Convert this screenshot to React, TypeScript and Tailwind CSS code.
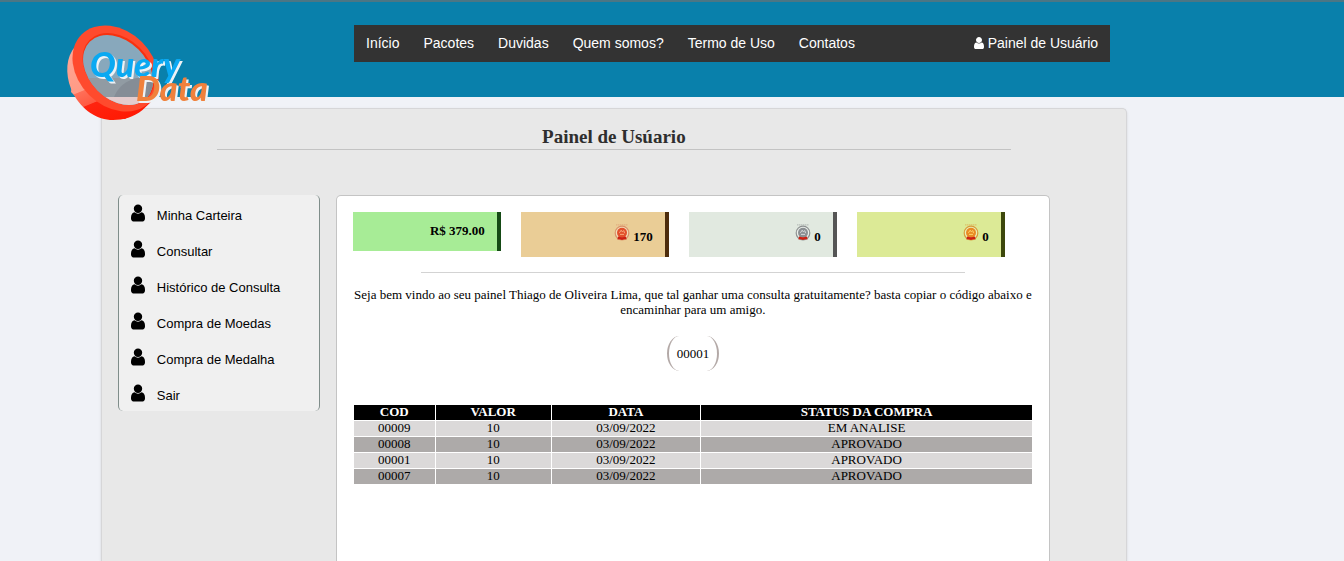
import React from "react";

const navLinks = ["Início", "Pacotes", "Duvidas", "Quem somos?", "Termo de Uso", "Contatos"];

const menuItems = [
  "Minha Carteira",
  "Consultar",
  "Histórico de Consulta",
  "Compra de Moedas",
  "Compra de Medalha",
  "Sair",
];

const purchases = [
  { cod: "00009", valor: "10", data: "03/09/2022", status: "EM ANALISE" },
  { cod: "00008", valor: "10", data: "03/09/2022", status: "APROVADO" },
  { cod: "00001", valor: "10", data: "03/09/2022", status: "APROVADO" },
  { cod: "00007", valor: "10", data: "03/09/2022", status: "APROVADO" },
];

const medals = [
  { name: "bronze", count: "170", card: "bg-[#eacd96] border-[#4d2c0c]", ring: "#d9926a", face: "#e2502c", glyph: "#f6a77c" },
  { name: "prata", count: "0", card: "bg-[#e1e9e0] border-[#555555]", ring: "#8d9191", face: "#8b9093", glyph: "#d5d8da" },
  { name: "ouro", count: "0", card: "bg-[#dcea96] border-[#3d480c]", ring: "#d99a3c", face: "#e98a24", glyph: "#fbd36b" },
];

function UserIcon({ className }: { className: string }) {
  return (
    <svg viewBox="0 128 1280 1536" fill="currentColor" className={className} aria-hidden="true">
      <path d="M1280 1399q0 109-62.5 187t-150.5 78h-854q-88 0-150.5-78t-62.5-187q0-85 8.5-160.5t31.5-152 58.5-131 94-89 134.5-34.5q131 128 313 128t313-128q76 0 134.5 34.5t94 89 58.5 131 31.5 152 8.5 160.5zm-256-887q0 159-112.5 271.5t-271.5 112.5-271.5-112.5-112.5-271.5 112.5-271.5 271.5-112.5 271.5 112.5 112.5 271.5z" />
    </svg>
  );
}

function Medal({ ring, face, glyph }: { ring: string; face: string; glyph: string }) {
  return (
    <svg viewBox="0 0 16 17" className="h-[17px] w-4" aria-hidden="true">
      <path d="M2 .9h12" stroke={ring} strokeWidth="1" strokeDasharray="1.5 .5" opacity=".6" />
      <circle cx="8" cy="9" r="6.8" fill="#fff" fillOpacity=".35" stroke={ring} strokeWidth="1.2" />
      <circle cx="8" cy="8.8" r="5" fill={face} />
      <path d="M5.4 8.8l1.8-2.6 1 1.6 1.6-1.2.8 2.6M6 10.4h4" fill="none" stroke={glyph} strokeWidth="1" />
      <path d="M4 12.6q4 1.4 8 0l.6 2.8-2.2-.2-2.4.8-2.4-.8-2.2.2z" fill="#cc1f12" />
    </svg>
  );
}

function Logo() {
  return (
    <svg viewBox="0 0 148 100" className="h-[100px] w-[148px]" role="img" aria-label="Query Data">
      <defs>
        <linearGradient id="coin-edge" x1="20" y1="20" x2="52" y2="98" gradientUnits="userSpaceOnUse">
          <stop offset="0" stopColor="#ffa795" />
          <stop offset=".52" stopColor="#ff9a85" />
          <stop offset=".53" stopColor="#ff6f58" />
          <stop offset=".7" stopColor="#ff5a42" />
          <stop offset=".71" stopColor="#ff2410" />
          <stop offset="1" stopColor="#ff1a04" />
        </linearGradient>
        <clipPath id="coin-glass">
          <ellipse cx="53" cy="48" rx="40" ry="29" transform="rotate(45 53 48)" />
        </clipPath>
      </defs>
      <g fill="url(#coin-edge)">
        <path d="M16.500 20L11 28L6 70L28 92L60 97L84.500 81Z" />
        <path d="M77.500 88C69 95 58 98 48 98C32 98 17 88 8.500 72C1 58 0 40 7 29C9.500 25 12 22 18 17L60 50L88 78Z" />
      </g>
      <ellipse cx="50.5" cy="46.500" rx="48" ry="37.400" transform="rotate(45 50.5 46.500)" fill="#ff4a2d" />
      <ellipse cx="53.500" cy="47" rx="41" ry="30" transform="rotate(45 53.500 47)" fill="#f7310f" />
      <g clipPath="url(#coin-glass)">
        <path d="M0 0h100v100H0z" fill="#89a9bc" />
        <path d="M0 56h100v44H0z" fill="#93999f" />
        <path d="M49 75Q55 60 72 56H100V75Z" fill="#858990" />
        <path d="M0 75h100v25H0z" fill="#f5d3d0" />
        <ellipse cx="50.500" cy="50" rx="40" ry="29" transform="rotate(45 50.500 50)" fill="#89a9bc" fillOpacity=".15" />
      </g>
      <g fontFamily="Lato, sans-serif" fontWeight="900" fontStyle="italic" className="[filter:drop-shadow(2px_2px_0_#eef2f5)]">
        <text x="25" y="55" fontSize="34" fill="#0aa9f2">Query</text>
        <text x="71" y="79" fontSize="34" fill="#f0813c">Data</text>
      </g>
    </svg>
  );
}

export default function App() {
  return (
    <div className="flex min-h-screen flex-col bg-[#f0f2f7] font-['Liberation_Serif',serif] text-[13px] leading-[15px] text-black">
      <header className="flex h-[97px] items-start border-t-2 border-[#4b7685] bg-[#0980ab] pr-[17.4%] pl-[65px]">
        <a href="#" className="relative z-10 mt-5 shrink-0">
          <Logo />
        </a>
        <nav className="mt-[23px] ml-[141px] flex h-[37px] flex-1 items-center justify-between bg-[#333333] px-3 pb-0.5 font-['Liberation_Sans',sans-serif] text-sm text-white">
          <ul className="flex gap-6">
            {navLinks.map((label) => (
              <li key={label}>
                <a href="#" className="whitespace-nowrap">{label}</a>
              </li>
            ))}
          </ul>
          <a href="#" className="flex items-center gap-1 whitespace-nowrap">
            <UserIcon className="h-3 w-[10px]" />
            Painel de Usuário
          </a>
        </nav>
      </header>

      <div className="mt-[11px] mr-[16.15%] ml-[7.5%] flex flex-1 flex-col rounded-t-[5px] border border-b-0 border-[#d6d6d8] bg-[#e8e8e8] px-4 shadow-sm">
        <h1 className="mx-auto w-4/5 border-b border-[#c3c3c3] pt-4 text-center text-[19px] leading-6 font-bold text-[#2e2e2e]">
          Painel de Usúario
        </h1>

        <div className="mt-[45px] flex flex-1 gap-4 pr-[60px]">
          <aside className="w-[202px] shrink-0 self-start rounded-[5px] border-x border-[#7f8d8a] bg-[#f0f0f0] font-['Liberation_Sans',sans-serif]">
            <ul>
              {menuItems.map((label) => (
                <li key={label}>
                  <a href="#" className="flex h-9 items-start gap-3 pt-[9px] pl-3">
                    <UserIcon className="h-[18px] w-[14px]" />
                    <span className="pt-1">{label}</span>
                  </a>
                </li>
              ))}
            </ul>
          </aside>

          <main className="min-w-0 flex-1 rounded-t-[5px] border border-b-0 border-[#c4c4c4] bg-white p-4">
            <div className="flex items-start gap-5 font-bold">
              <div className="w-[148px] border-r-4 border-[#154a15] bg-[#a7ec96] pt-[11px] pr-3 pb-[13px] text-right">R$ 379.00</div>
              {medals.map((m) => (
                <div key={m.name} className={`flex h-[45px] w-[148px] justify-end gap-[3px] border-r-4 pt-3 pr-3 ${m.card}`}>
                  <Medal ring={m.ring} face={m.face} glyph={m.glyph} />
                  <span className="pt-[5px]">{m.count}</span>
                </div>
              ))}
            </div>

            <hr className="mx-auto mt-[15px] w-4/5 border-[#d3d3d3]" />

            <p className="mt-[14px] text-center">
              Seja bem vindo ao seu painel Thiago de Oliveira Lima, que tal ganhar uma consulta gratuitamente? basta
              copiar o código abaixo e encaminhar para um amigo.
            </p>

            <div className="mx-auto mt-[19px] w-fit rounded-[14px/20px] border-x-2 border-[#b3a9a7] px-2 py-[10px]">00001</div>

            <table className="mt-[33px] w-full table-fixed border-separate border-spacing-px text-center leading-[13px]">
              <colgroup>
                <col className="w-[12%]" />
                <col className="w-[17%]" />
                <col className="w-[22%]" />
                <col />
              </colgroup>
              <thead className="bg-black text-white">
                <tr>
                  {["COD", "VALOR", "DATA", "STATUS DA COMPRA"].map((h) => (
                    <th key={h} scope="col" className="px-0 pt-0 pb-0.5">{h}</th>
                  ))}
                </tr>
              </thead>
              <tbody>
                {purchases.map((p) => (
                  <tr key={p.cod} className="odd:bg-[#dbd9d9] even:bg-[#adaaa9]">
                    <td className="px-0 pt-0 pb-0.5">{p.cod}</td>
                    <td className="px-0 pt-0 pb-0.5">{p.valor}</td>
                    <td className="px-0 pt-0 pb-0.5">{p.data}</td>
                    <td className="px-0 pt-0 pb-0.5">{p.status}</td>
                  </tr>
                ))}
              </tbody>
            </table>
          </main>
        </div>
      </div>
    </div>
  );
}
